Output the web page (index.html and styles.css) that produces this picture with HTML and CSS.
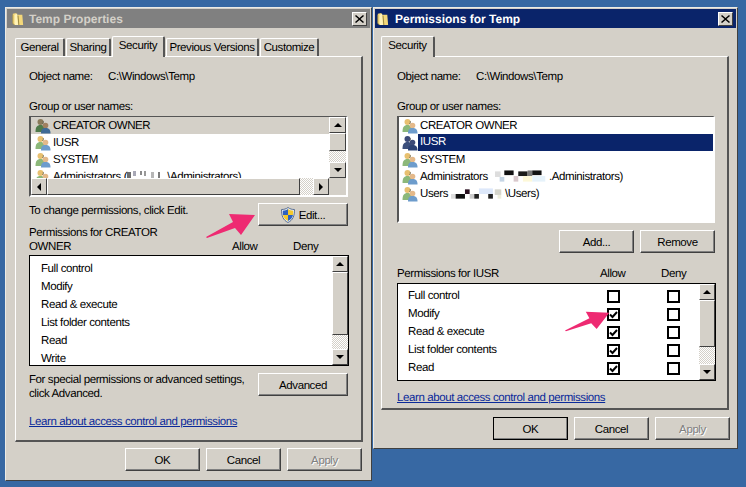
FILE: index.html
```html
<!DOCTYPE html>
<html lang="en">
<head>
<meta charset="utf-8">
<title>Temp Properties and Permissions for Temp</title>
<link rel="stylesheet" href="styles.css">
</head>
<body>
<svg class="defs" width="0" height="0" aria-hidden="true">
  <defs>
    <symbol id="folder" viewBox="0 0 14 16">
      <path d="M1 2 L5 1 L6 3 L12 3 L13 15 L3 15 L1 13 Z" fill="#f4d87a"/>
      <path d="M3 3 L6 2 L7 15 L3 15 Z" fill="#fff3b8"/>
      <path d="M7 4 L8 15" stroke="#8a7a3a" stroke-width="1"/>
      <path d="M1 3 L1 13 L3 15" stroke="#b09a4a" stroke-width="1" fill="none"/>
    </symbol>
    <symbol id="users" viewBox="0 0 16 16">
      <circle cx="5.5" cy="4" r="3" style="fill:var(--skin)"/>
      <path d="M0.5 14 C0.5 9 2 7 5.5 7 C9 7 10 9 10 14 Z" style="fill:var(--back)"/>
      <circle cx="10.5" cy="7.5" r="2.8" style="fill:var(--skin2)"/>
      <path d="M6 15.5 C6 11.5 7.5 10 10.5 10 C14 10 15.5 11.5 15.5 15.5 Z" style="fill:var(--front)"/>
      <path d="M8 3 C9 4 8 5 7.5 6" stroke="#5a5a4a" stroke-width="0.8" fill="none"/>
    </symbol>
    <symbol id="shield" viewBox="0 0 14 16">
      <path d="M7 0.5 C9 2 11 2.500 13.500 2.500 C13.500 9 12 13 7 15.500 C2 13 0.500 9 0.500 2.500 C3 2.500 5 2 7 0.500 Z" fill="#e8eef4" stroke="#5a6f92"/>
      <path d="M7 2 L7 8 L2 8 C1.800 6 1.800 5 1.800 3.800 C4 3.600 5.500 3 7 2 Z" fill="#2e62c0"/>
      <path d="M7 2 C8.500 3 10 3.600 12.200 3.800 C12.200 5 12.200 6 12 8 L7 8 Z" fill="#f4c92c"/>
      <path d="M2 8 L7 8 L7 14 C4 12.500 2.500 10.500 2 8 Z" fill="#f4c92c"/>
      <path d="M12 8 L7 8 L7 14 C10 12.500 11.500 10.500 12 8 Z" fill="#2e62c0"/>
    </symbol>
    <symbol id="close" viewBox="0 0 9 8">
      <path d="M1 0 L4.500 3 L8 0 L9 1 L5.500 4 L9 7 L8 8 L4.500 5 L1 8 L0 7 L3.500 4 L0 1 Z" fill="#000"/>
    </symbol>
    <symbol id="check" viewBox="0 0 9 9">
      <path d="M1 4.500 L3.500 7 L8 2" fill="none" stroke="#000" stroke-width="2"/>
    </symbol>
    <symbol id="pink" viewBox="0 0 52 27" preserveAspectRatio="none">
      <polygon points="0,24 27,9 23,1 49,2 35,22 29,15 1,25" fill="#ee2a72"/>
    </symbol>
  </defs>
</svg>

<section class="window window-props">
  <header class="title title-inactive">
    <svg class="folder"><use href="#folder"/></svg>
    <span class="title-text">Temp Properties</span>
    <span class="close"><svg class="close-x"><use href="#close"/></svg></span>
  </header>
  <nav class="tabs">
    <span class="tab tab-general">General</span>
    <span class="tab tab-sharing">Sharing</span>
    <span class="tab tab-active tab-security">Security</span>
    <span class="tab tab-previous">Previous Versions</span>
    <span class="tab tab-customize">Customize</span>
  </nav>
  <div class="panel panel-props">
    <div class="line object-line"><span class="object-label">Object name:</span><span>C:\Windows\Temp</span></div>
    <div class="line group-line">Group or user names:</div>
    <div class="listbox listbox-props">
      <ul class="users">
        <li class="user user-focus"><svg class="user-icon"><use href="#users"/></svg><span>CREATOR OWNER</span></li>
        <li class="user"><svg class="user-icon"><use href="#users"/></svg><span>IUSR</span></li>
        <li class="user"><svg class="user-icon"><use href="#users"/></svg><span>SYSTEM</span></li>
        <li class="user"><svg class="user-icon"><use href="#users"/></svg><span>Administrators (</span>
          <svg class="mosaic mosaic-light" viewBox="0 0 40 12"><rect x="0" y="1" width="4" height="6" fill="#555"/><rect x="6" y="0" width="3" height="5" fill="#99a"/><rect x="13" y="0" width="2" height="4" fill="#777"/><rect x="17" y="0" width="2" height="5" fill="#888"/><rect x="24" y="1" width="3" height="6" fill="#aaa"/><rect x="31" y="1" width="2" height="6" fill="#666"/></svg><span>\Administrators)</span></li>
      </ul>
      <div class="vscroll vscroll-names">
        <span class="sbtn"><i class="arrow arrow-up"></i></span>
        <span class="thumb thumb-names"></span>
        <span class="track"></span>
        <span class="sbtn"><i class="arrow arrow-down"></i></span>
      </div>
      <div class="hscroll">
        <span class="sbtn"><i class="arrow arrow-left"></i></span>
        <span class="thumb thumb-h"></span>
        <span class="track"></span>
        <span class="sbtn"><i class="arrow arrow-right"></i></span>
      </div>
      <span class="corner"></span>
    </div>
    <div class="change-row">
      <span class="change-text">To change permissions, click Edit.</span>
      <button class="btn btn-side"><svg class="shield"><use href="#shield"/></svg>Edit...</button>
    </div>
    <div class="perm-head perm-head-props">
      <span class="perm-name">Permissions for CREATOR OWNER</span>
      <span class="perm-col">Allow</span>
      <span class="perm-col">Deny</span>
    </div>
    <div class="permbox permbox-props">
      <ul class="perms">
        <li class="perm">Full control</li>
        <li class="perm">Modify</li>
        <li class="perm">Read &amp; execute</li>
        <li class="perm">List folder contents</li>
        <li class="perm">Read</li>
        <li class="perm">Write</li>
      </ul>
      <div class="vscroll">
        <span class="sbtn"><i class="arrow arrow-up"></i></span>
        <span class="thumb thumb-perm-props"></span>
        <span class="track"></span>
        <span class="sbtn"><i class="arrow arrow-down"></i></span>
      </div>
    </div>
    <div class="advanced-row">
      <span class="advanced-text">For special permissions or advanced settings, click Advanced.</span>
      <button class="btn btn-side">Advanced</button>
    </div>
    <a class="link link-props" href="#">Learn about access control and permissions</a>
  </div>
  <footer class="actions actions-props">
    <button class="btn btn-action">OK</button>
    <button class="btn btn-action">Cancel</button>
    <button class="btn btn-action btn-disabled">Apply</button>
  </footer>
</section>

<section class="window window-perms">
  <header class="title title-active">
    <svg class="folder"><use href="#folder"/></svg>
    <span class="title-text">Permissions for Temp</span>
    <span class="close"><svg class="close-x"><use href="#close"/></svg></span>
  </header>
  <nav class="tabs">
    <span class="tab tab-active tab-only">Security</span>
  </nav>
  <div class="panel panel-perms">
    <div class="line object-line"><span class="object-label">Object name:</span><span>C:\Windows\Temp</span></div>
    <div class="line group-line">Group or user names:</div>
    <div class="listbox listbox-perms">
      <ul class="users">
        <li class="user"><svg class="user-icon"><use href="#users"/></svg><span>CREATOR OWNER</span></li>
        <li class="user user-selected"><svg class="user-icon"><use href="#users"/></svg><span class="user-selected-text">IUSR</span></li>
        <li class="user"><svg class="user-icon"><use href="#users"/></svg><span>SYSTEM</span></li>
        <li class="user"><svg class="user-icon"><use href="#users"/></svg><span>Administrators</span>
          <svg class="mosaic mosaic-admin" viewBox="0 0 58 13"><rect x="0" y="1" width="6" height="6" fill="#ddd"/><rect x="5" y="7" width="5" height="5" fill="#c5d5e5"/><rect x="10" y="0" width="10" height="5" fill="#111"/><rect x="20" y="6" width="5" height="6" fill="#d8c8cc"/><rect x="25" y="1" width="10" height="5" fill="#1a1a1a"/><rect x="35" y="0" width="5" height="6" fill="#777"/><rect x="40" y="0" width="10" height="5" fill="#111"/><rect x="30" y="6" width="10" height="6" fill="#fdf8d8"/><rect x="40" y="6" width="14" height="6" fill="#e6f2fa"/></svg><span>.Administrators)</span></li>
        <li class="user"><svg class="user-icon"><use href="#users"/></svg><span>Users</span>
          <svg class="mosaic mosaic-users" viewBox="0 0 58 12"><rect x="0" y="6" width="5" height="5" fill="#ddd"/><rect x="5" y="6" width="10" height="5" fill="#111"/><rect x="15" y="1" width="5" height="5" fill="#2a1020"/><rect x="20" y="6" width="5" height="5" fill="#ccc"/><rect x="25" y="6" width="5" height="5" fill="#222"/><rect x="30" y="0" width="15" height="6" fill="#dde8fa"/><rect x="40" y="6" width="5" height="5" fill="#222"/><rect x="47" y="1" width="7" height="6" fill="#d5d5cc"/><rect x="50" y="7" width="4" height="4" fill="#eed"/></svg><span>\Users)</span></li>
      </ul>
    </div>
    <div class="add-row">
      <button class="btn btn-action btn-add">Add...</button>
      <button class="btn btn-action btn-remove">Remove</button>
    </div>
    <div class="perm-head perm-head-perms">
      <span class="perm-name">Permissions for IUSR</span>
      <span class="perm-col">Allow</span>
      <span class="perm-col">Deny</span>
    </div>
    <div class="permbox permbox-perms">
      <ul class="perms">
        <li class="perm"><span class="perm-label">Full control</span><span class="cb"></span><span class="cb"></span></li>
        <li class="perm"><span class="perm-label">Modify</span><span class="cb"><svg class="tick"><use href="#check"/></svg></span><span class="cb"></span></li>
        <li class="perm"><span class="perm-label">Read &amp; execute</span><span class="cb"><svg class="tick"><use href="#check"/></svg></span><span class="cb"></span></li>
        <li class="perm"><span class="perm-label">List folder contents</span><span class="cb"><svg class="tick"><use href="#check"/></svg></span><span class="cb"></span></li>
        <li class="perm"><span class="perm-label">Read</span><span class="cb"><svg class="tick"><use href="#check"/></svg></span><span class="cb"></span></li>
        <li class="perm"><span class="perm-label"></span><span class="cb"></span><span class="cb"></span></li>
      </ul>
      <div class="vscroll">
        <span class="sbtn"><i class="arrow arrow-up"></i></span>
        <span class="thumb thumb-perm-perms"></span>
        <span class="track"></span>
        <span class="sbtn"><i class="arrow arrow-down"></i></span>
      </div>
    </div>
    <a class="link link-perms" href="#">Learn about access control and permissions</a>
  </div>
  <footer class="actions actions-perms">
    <button class="btn btn-action btn-default">OK</button>
    <button class="btn btn-action">Cancel</button>
    <button class="btn btn-action btn-disabled">Apply</button>
  </footer>
</section>

<svg class="pointer pointer-edit"><use href="#pink"/></svg>
<svg class="pointer pointer-modify"><use href="#pink"/></svg>
</body>
</html>
```

FILE: styles.css
```css
* { box-sizing: border-box; }

html, body { margin: 0; padding: 0; }

body {
  position: relative;
  width: 746px;
  height: 487px;
  overflow: hidden;
  background: #3768a3;
  font-family: "Liberation Sans", Arial, sans-serif;
  font-size: 11.5px;
  letter-spacing: -0.4px;
  line-height: 14px;
  color: #000;
  text-rendering: geometricPrecision;
}

.defs { position: absolute; }

ul { list-style: none; margin: 0; padding: 0; }

/* windows sit on the desktop */
.window {
  position: absolute;
  top: 7px;
  display: flex;
  flex-direction: column;
  padding: 2px;
  background: #d4d0c8;
  border-top: 1px solid #ecebe6;
  border-left: 1px solid #ecebe6;
  border-right: 1px solid #404040;
  border-bottom: 1px solid #404040;
}

.window-props { left: 5px; width: 367px; height: 474px; }
.window-perms { left: 373px; width: 365px; height: 442px; }

.title {
  display: flex;
  align-items: center;
  flex: none;
  height: 19px;
  margin-top: -1px;
  margin-left: -1px;
  margin-right: -1px;
  padding: 0 3px 0 5px;
  font-size: 12px;
  font-weight: bold;
  letter-spacing: 0;
}

.title-inactive { background: #808080; color: #d4d0c8; }
.title-active { background: #0a246a; color: #fff; }

.folder { width: 12px; height: 16px; flex: none; }
.title-text { flex: 1; margin-left: 5px; }
.window-perms .folder { margin-left: -3px; }
.window-perms .title-text { margin-left: 6px; }

.close {
  display: flex;
  align-items: center;
  justify-content: center;
  width: 15px;
  height: 14px;
  background: #d4d0c8;
  border: 1px solid;
  border-color: #fff #404040 #404040 #fff;
}

.close-x { width: 9px; height: 8px; }

/* tabs */
.tabs {
  display: flex;
  align-items: flex-end;
  flex: none;
  height: 20px;
  margin-top: 8px;
  padding-left: 7px;
  position: relative;
  z-index: 1;
}

.tab {
  height: 18px;
  margin-right: 1px;
  text-align: center;
  line-height: 19px;
  white-space: nowrap;
  background: #d4d0c8;
  border-top: 1px solid #fff;
  border-left: 1px solid #fff;
  border-right: 2px solid #555;
  border-radius: 2px 2px 0 0;
}

.tab-active {
  height: 21px;
  margin-bottom: -1px;
  line-height: 18px;
}

.tab-general { width: 50px; }
.tab-sharing { width: 45px; }
.tab-security { width: 53px; }
.tab-previous { width: 93px; }
.tab-customize { width: 59px; }
.tab-only { width: 54px; margin-left: -2px; }

/* tab body */
.panel {
  flex: none;
  background: #d4d0c8;
  border-top: 1px solid #fff;
  border-left: 1px solid #fff;
  border-right: 2px solid #555;
  border-bottom: 2px solid #555;
}

.panel-props { width: 348px; height: 386px; margin-left: 7px; padding-left: 13px; }
.panel-perms { width: 348px; height: 354px; margin-left: 5px; padding-left: 15px; }

.line { height: 14px; }
.object-line { display: flex; margin-top: 13px; }
.object-label { width: 79px; }
.group-line { margin-top: 16px; }

/* list of names */
.listbox {
  display: grid;
  margin-top: 2px;
  background: #fff;
  border: 2px solid;
  border-top-width: 1px;
  border-color: #555 #fff #fff #555;
  overflow: hidden;
}

.listbox-props {
  width: 319px;
  height: 81px;
  grid-template-columns: 1fr 17px;
  grid-template-rows: 1fr 17px;
}

.listbox-perms {
  width: 318px;
  height: 107px;
  grid-template-columns: 1fr;
  grid-template-rows: 1fr;
}

.users { overflow: hidden; min-width: 0; }

.user {
  display: flex;
  align-items: center;
  height: 17px;
  padding-left: 4px;
  white-space: nowrap;
  --skin: #e8c070;
  --skin2: #e4b98a;
  --back: #8cb87a;
  --front: #6d9ccc;
}

.listbox-perms .user { padding-left: 3px; }

.user-focus {
  background: #d4d0c8;
  --skin: #8a7a5a;
  --skin2: #a08060;
  --back: #4f7a4a;
  --front: #3f6a96;
}

.user-icon { width: 16px; height: 16px; flex: none; margin-right: 2px; }

.user-selected {
  --skin: #3c4a78;
  --skin2: #3c4a78;
  --back: #3c4f7c;
  --front: #2d4274;
}

.user-selected-text {
  flex: 1;
  align-self: stretch;
  line-height: 17px;
  padding-left: 2px;
  margin-left: -2px;
  background: #0a246a;
  color: #fff;
}

.mosaic { flex: none; height: 12px; }
.mosaic-light { width: 40px; opacity: 0.85; }
.mosaic-admin { width: 54px; height: 13px; margin-left: 7px; }
.mosaic-users { width: 54px; margin-left: 3px; }

.vscroll { display: flex; flex-direction: column; background: #d4d0c8; }
.hscroll { display: flex; background: #d4d0c8; }

.sbtn {
  display: flex;
  align-items: center;
  justify-content: center;
  flex: none;
  background: #d4d0c8;
  border: 1px solid;
  border-color: #fff #404040 #404040 #fff;
}

.vscroll .sbtn { height: 16px; }
.hscroll .sbtn { width: 16px; }

.thumb {
  flex: none;
  background: #d4d0c8;
  border: 1px solid;
  border-color: #fff #404040 #404040 #fff;
}

.thumb-names { height: 18px; }
.thumb-h { width: 253px; }
.thumb-perm-props { height: 63px; }
.thumb-perm-perms { height: 47px; }

.track {
  flex: 1;
  background: repeating-conic-gradient(#fff 0 25%, #d4d0c8 0 50%) 0 0 / 2px 2px;
}

.corner { background: #d4d0c8; }

.arrow { display: block; width: 0; height: 0; border: 4px solid transparent; }
.arrow-up { border-top: 0; border-bottom-color: #000; }
.arrow-down { border-bottom: 0; border-top-color: #000; }
.arrow-left { border-left: 0; border-right-color: #000; }
.arrow-right { border-right: 0; border-left-color: #000; }

/* rows under the lists */
.change-row {
  display: flex;
  justify-content: space-between;
  width: 319px;
  height: 22px;
  margin-top: 6px;
}

.change-text { padding-top: 1px; }

.btn {
  display: flex;
  align-items: center;
  justify-content: center;
  flex: none;
  height: 23px;
  padding: 0;
  font: inherit;
  letter-spacing: inherit;
  color: inherit;
  background: #d4d0c8;
  border: 1px solid;
  border-color: #fff #404040 #404040 #fff;
  box-shadow: inset -1px -1px 0 #808080;
}

.btn-side { width: 90px; }
.btn-action { width: 75px; }
.btn-default { outline: 1px solid #000; outline-offset: -1px; border-color: #000; }
.btn-disabled { color: #808080; text-shadow: 1px 1px 0 #fff; }

.shield { width: 14px; height: 16px; margin-right: 4px; }

.perm-head { display: flex; align-items: flex-end; }
.perm-head-props { margin-top: 1px; }
.perm-head-perms { margin-top: 14px; }
.perm-name { width: 203px; padding-right: 40px; }
.perm-head-perms .perm-name { padding-right: 0; }
.perm-col { width: 61px; }

.permbox {
  display: grid;
  grid-template-columns: 1fr 16px;
  margin-top: 2px;
  background: #fff;
  border: 1px solid #000;
  overflow: hidden;
}

.permbox-props { width: 320px; height: 111px; margin-top: 1px; }
.permbox-perms { width: 319px; height: 98px; }

.perms { overflow: hidden; padding-top: 3px; min-width: 0; }
.permbox-props .perms { padding-top: 4px; }

.perm {
  display: flex;
  align-items: center;
  height: 18px;
  padding-left: 11px;
}

.permbox-perms .perm { padding-left: 10px; }

.perm-label { flex: none; width: 199px; }

.cb {
  display: flex;
  align-items: center;
  justify-content: center;
  flex: none;
  width: 13px;
  height: 13px;
  background: #fff;
  border: 2px solid #000;
}

.cb + .cb { margin-left: 47px; }

.tick { width: 9px; height: 9px; }

.advanced-row {
  display: flex;
  justify-content: space-between;
  width: 319px;
  margin-top: 7px;
}

.advanced-text { width: 225px; }

.link {
  display: block;
  color: #0a2a9a;
  text-decoration: underline;
}

.link-props { margin-top: 14px; }
.link-perms { margin-top: 10px; }

.add-row {
  display: flex;
  justify-content: flex-end;
  width: 318px;
  margin-top: 7px;
  gap: 6px;
}

.actions { display: flex; justify-content: flex-end; gap: 6px; flex: none; }
.actions-props { margin-top: 6px; padding-right: 7px; }
.actions-perms { margin-top: 7px; padding-right: 5px; }

/* annotation arrows over the dialogs */
.pointer { position: absolute; }
.pointer-edit { left: 206px; top: 213px; width: 52px; height: 27px; }
.pointer-modify { left: 565px; top: 311px; width: 47px; height: 22px; }
```
